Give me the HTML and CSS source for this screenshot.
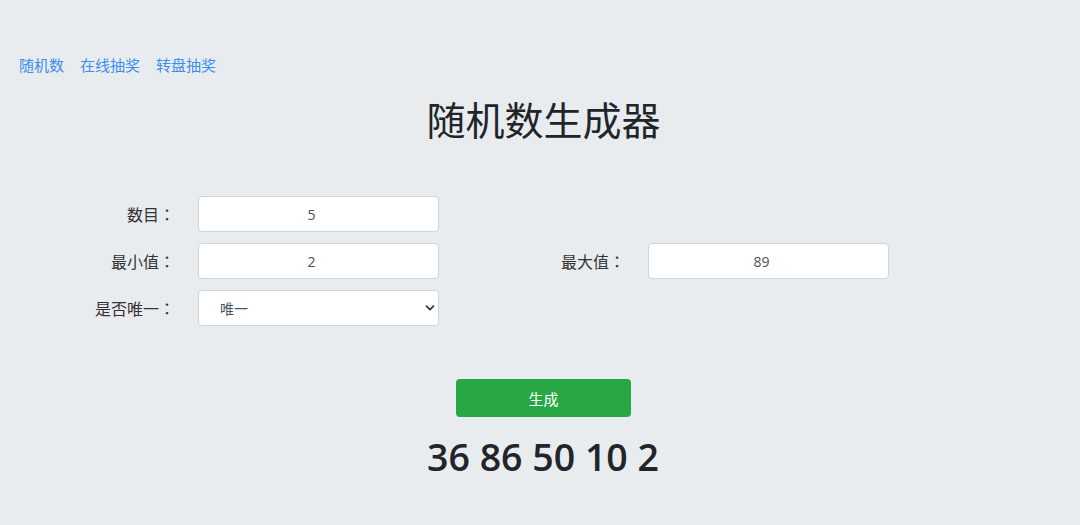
FILE: index.html
```html
<!DOCTYPE html>
<html lang="zh">
<head>
<meta charset="utf-8">
<title>随机数生成器</title>
<link rel="stylesheet" href="styles.css">
</head>
<body>
<nav class="nav">
  <a href="#" class="nav-link">随机数</a>
  <a href="#" class="nav-link">在线抽奖</a>
  <a href="#" class="nav-link">转盘抽奖</a>
</nav>
<h1 class="title">随机数生成器</h1>
<form class="form">
  <label class="label" lang="ja">数目：</label>
  <input class="field" type="text" value="5">
  <span></span><span></span>
  <label class="label" lang="ja">最小值：</label>
  <input class="field" type="text" value="2">
  <label class="label" lang="ja">最大值：</label>
  <input class="field" type="text" value="89">
  <label class="label" lang="ja">是否唯一：</label>
  <div class="select-wrap">
    <select class="field select">
      <option>唯一</option>
      <option>不唯一</option>
    </select>
    <svg class="chevron" width="10" height="8" viewBox="0 0 10 8"><path d="M1.5 2.2 L5 5.7 L8.5 2.2" fill="none" stroke="#343a40" stroke-width="1.8" stroke-linecap="round" stroke-linejoin="round"/></svg>
  </div>
</form>
<div class="actions">
  <button class="btn" type="button">生成</button>
</div>
<div class="result">36 86 50 10 2</div>
</body>
</html>
```
FILE: styles.css
```css
html, body {
  margin: 0;
  padding: 0;
}
body {
  background: #e9ecef;
  font-family: "Open Sans", "Noto Sans CJK SC", sans-serif;
  color: #212529;
}
.nav {
  padding: 55px 0 0 19px;
  display: flex;
  gap: 16px;
  line-height: 20px;
}
.nav-link {
  color: #3b8ef0;
  text-decoration: none;
  font-size: 15px;
}
.title {
  margin: 15px 0 0 7px;
  text-align: center;
  font-family: "Noto Sans CJK SC", sans-serif;
  font-weight: 400;
  font-size: 39px;
  line-height: 56px;
  color: #212529;
}
.form {
  margin-top: 50px;
  display: grid;
  grid-template-columns: 175px 241px 163px 241px;
  column-gap: 23px;
  row-gap: 11px;
  align-items: center;
}
.label {
  text-align: right;
  font-size: 16px;
  color: #333;
  font-family: "Noto Sans CJK JP", sans-serif;
}
.field {
  box-sizing: border-box;
  width: 241px;
  height: 36px;
  border: 1px solid #ced4da;
  border-radius: 4px;
  background: #fff;
  font-family: "Open Sans", "Noto Sans CJK SC", sans-serif;
  font-size: 14px;
  color: #495057;
  text-align: center;
  padding: 0 19px 0 5px;
  outline: none;
}
.select-wrap {
  position: relative;
  width: 241px;
  height: 36px;
}
.select {
  -webkit-appearance: none;
  appearance: none;
  text-align: left;
  padding-left: 21px;
}
.chevron {
  position: absolute;
  right: 4px;
  top: 14px;
}
.actions {
  margin-top: 53px;
  padding-left: 7px;
  display: flex;
  justify-content: center;
}
.btn {
  width: 175px;
  height: 38px;
  border: none;
  border-radius: 4px;
  background: #28a745;
  color: #fff;
  font-family: "Noto Sans CJK SC", sans-serif;
  font-size: 15px;
}
.result {
  margin-top: 14px;
  padding-left: 6px;
  text-align: center;
  font-family: "Open Sans", sans-serif;
  font-weight: 600;
  font-size: 37.5px;
  line-height: 52px;
}
```
